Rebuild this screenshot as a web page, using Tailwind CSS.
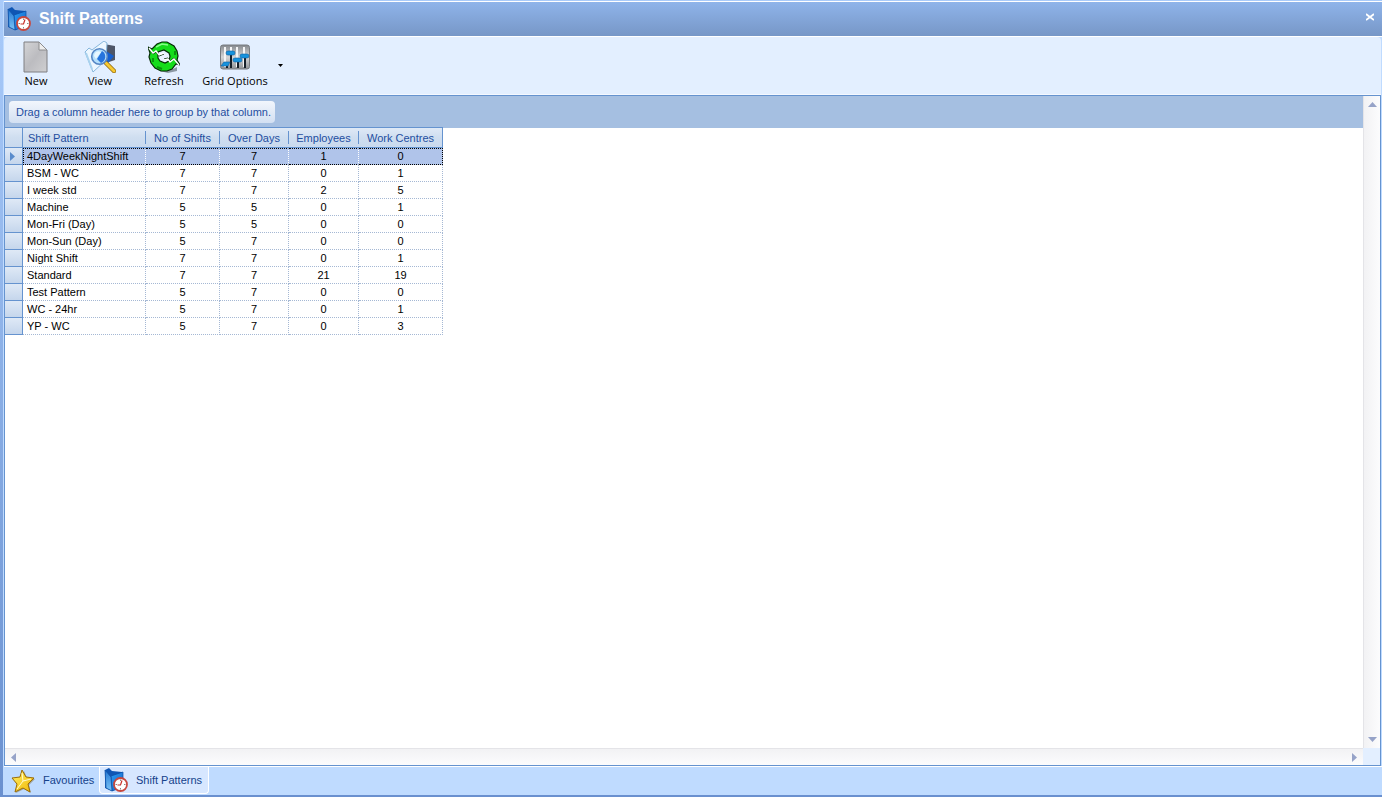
<!DOCTYPE html>
<html lang="en">
  <head>
    <meta charset="UTF-8" />
    <meta name="viewport" content="width=device-width, initial-scale=1.0" />
    <title>Shift Patterns</title>
    <script src="https://cdn.jsdelivr.net/npm/@tailwindcss/browser@4"></script>
  </head>
  <body class="h-screen overflow-hidden flex flex-col pt-px pl-[3px] pb-0.5 bg-linear-to-b from-[#a9cbfa] to-[#6a90cf] font-['Liberation_Sans',sans-serif] text-[11px] text-[#15428b]">
    <svg class="absolute size-0">
      <defs>
        <linearGradient id="folderBack" x1="0" y1="0" x2="1" y2="1">
          <stop offset="0" stop-color="#2c9cf4" />
          <stop offset="1" stop-color="#1262c4" />
        </linearGradient>
        <linearGradient id="folderFront" x1="0" y1="0" x2="0" y2="1">
          <stop offset="0" stop-color="#2478d4" />
          <stop offset="1" stop-color="#7cc4f6" />
        </linearGradient>
        <linearGradient id="paper" x1="0" y1="0" x2="1" y2="1">
          <stop offset="0" stop-color="#d4d4d6" />
          <stop offset="0.5" stop-color="#bcbcc0" />
          <stop offset="1" stop-color="#cfcfd1" />
        </linearGradient>
        <linearGradient id="gold" x1="0" y1="0" x2="1" y2="1">
          <stop offset="0" stop-color="#fff36a" />
          <stop offset="1" stop-color="#f0b400" />
        </linearGradient>
        <linearGradient id="panel" x1="0" y1="0" x2="0" y2="1">
          <stop offset="0" stop-color="#85898e" />
          <stop offset="0.5" stop-color="#d4d6d8" />
          <stop offset="1" stop-color="#8e9296" />
        </linearGradient>
        <symbol id="folderClock" viewBox="0 0 24 24">
          <path d="M1 2 5 0 8 3 18 4V18L8 23 1 20z" fill="#0f56b4" />
          <path d="M7 8 19 4V19L8 23z" fill="url(#folderBack)" stroke="#0d4ca4" stroke-width=".7" />
          <path d="M1 2 7 9 8 23 2 20z" fill="url(#folderFront)" stroke="#1253a8" stroke-width=".8" />
          <circle cx="16.500" cy="16.500" r="6.500" fill="#fff" stroke="#c8483e" stroke-width="1.800" />
          <path d="M16.500 11.500v1.500M16.500 20v1.500M11.500 16.500H13M20 16.500h1.500" stroke="#888" />
          <path d="M18 12.500 16.500 17H13.500" fill="none" stroke="#c8302a" stroke-width="1.200" />
        </symbol>
      </defs>
    </svg>

    <div class="flex-1 min-h-0 flex flex-col pl-px bg-[#bfdbff]">
      <!-- Title bar -->
      <header class="h-9 shrink-0 border-y border-white bg-linear-to-b from-[#8fb4ea] to-[#7797c7] flex items-center pl-[3px] pr-2">
        <svg class="size-6"><use href="#folderClock" /></svg>
        <h1 class="ml-2 text-[16px] leading-5 font-bold text-white">Shift Patterns</h1>
        <button class="ml-auto mb-1 size-2" aria-label="Close">
          <svg class="size-2" viewBox="0 0 8 8" stroke="#fff" stroke-width="1.800"><path d="M0 1 8 7M8 1 0 7" /></svg>
        </button>
      </header>

      <!-- Toolbar -->
      <nav class="h-[58px] shrink-0 mr-px rounded-t-sm bg-[#e3efff] border-b border-b-[#f4f8ff] flex items-start pt-1 text-[11px] leading-4 text-black font-['Open_Sans',sans-serif]">
        <button class="w-16 flex flex-col items-center">
          <svg class="size-8" viewBox="0 0 32 32">
            <path d="M4 1H19L27 9V31H4z" fill="url(#paper)" stroke="#7f7f82" />
            <path d="M19 1V9H27z" fill="#eee" stroke="#8c8c8e" />
          </svg>
          New
        </button>
        <button class="w-16 flex flex-col items-center">
          <svg class="size-8" viewBox="0 0 32 32">
            <path d="M20 3 31 5 31 19 22 22z" fill="#4e5668" />
            <path d="M22 10 30 15 24 22 20 20z" fill="#1560d0" />
            <path d="M1 11 5 7 8 9 20 0 23 2 22 19 9 31z" fill="#edf7ff" stroke="#86b6dc" />
            <path d="M2 12 8 28" stroke="#a9d2ee" stroke-width="2" />
            <path d="m22 22 8 8" stroke="#8d6610" stroke-width="4.500" stroke-linecap="round" />
            <path d="m22 22 8 8" stroke="#f7c931" stroke-width="3" stroke-linecap="round" />
            <circle cx="15.500" cy="15.500" r="7.800" fill="#b4dffc" stroke="#5585c4" stroke-width="1.600" />
            <path d="M18 10c5 3 4 10-1 12l-4-4z" fill="#2674dd" />
            <path d="M10 15c0-4 4-6 7-4l-5 7z" fill="#e8f7ff" />
          </svg>
          View
        </button>
        <button class="w-16 flex flex-col items-center">
          <svg class="size-8" viewBox="0 0 32 32">
            <path d="M12 30 25 28 29 26V30L20 32z" fill="#8b98a4" />
            <path fill-rule="evenodd" d="M0 6 4 8 9 3 14 1H19L26 5 29 10 30 15 29 19 32 24 28 23 24 28 19 30H13L7 27 3 22 1 16 2 12zM10 11 10 17 12 20 17 22 21 20 22 15 21 12 16 9z" fill="#15dc1b" stroke="#052c05" stroke-width="1.200" />
            <path d="M12 13 19 12 21 15 20 18 16 20 12 18z" fill="#eaf3ff" />
            <path d="M5 17 5 21M27 10 27 14M9 26 14 28" fill="none" stroke="#0a930e" stroke-width="2" />
            <path d="M8 6 14 3 20 4" fill="none" stroke="#84ff86" stroke-width="1.500" />
            <path d="M1 8 5 13 8 11 11 15 16 13" fill="none" stroke="#052c05" stroke-width="1" />
            <path d="M1 7 5 12 8 10 11 14 16 12" fill="none" stroke="#fff" stroke-width="1.400" />
            <path d="M16 18 20 17 22 20 26 17 31 23" fill="none" stroke="#052c05" stroke-width="1" />
            <path d="M16 19 20 18 22 21 26 18 31 24" fill="none" stroke="#fff" stroke-width="1.400" />
          </svg>
          Refresh
        </button>
        <button class="w-[78px] flex flex-col items-center">
          <svg class="size-8" viewBox="0 0 32 32">
            <rect x="1.500" y="4" width="29" height="24" rx="2.500" fill="url(#panel)" stroke="#777b80" />
            <path d="M6 6v20M12 6v20M18 6v20M25 6v20" stroke="#f4f5f6" stroke-width="2" />
            <path d="M8 22v5M12 13v14M19 20v7M26 15v12" stroke="#16202a" stroke-width="2" />
            <g fill="#1793dd" stroke="#0a5fa4" stroke-width=".6">
              <path d="M2 25 5 21H11L9 25z" />
              <rect x="7" y="10" width="9" height="4" rx="2" />
              <rect x="14" y="17" width="9" height="4" rx="2" />
              <rect x="21" y="13" width="9" height="4" rx="2" />
            </g>
          </svg>
          Grid Options
        </button>
        <button class="mt-[23px] ml-1" aria-label="More grid options">
          <svg class="w-[5px] h-[3px]" viewBox="0 0 5 3"><path d="M0 0H5L2.500 3z" /></svg>
        </button>
      </nav>

      <!-- Grid -->
      <main class="flex-1 min-h-0 mr-px border border-[#6593cf] bg-white grid grid-cols-[1fr_17px] grid-rows-[1fr_17px]">
        <section class="min-w-0 overflow-hidden">
          <div class="h-8 -mb-px bg-[#a5bfe1] px-1 pt-[5px]">
            <p class="w-fit h-[22px] rounded-sm bg-linear-to-b from-[#f2f6fc] to-[#d3e0f2] pl-[7px] pr-1 leading-[22px] text-[#1f4ea0] whitespace-nowrap">Drag a column header here to group by that column.</p>
          </div>
          <table class="w-[438px] table-fixed border-separate border-spacing-0 leading-4 text-black whitespace-nowrap">
            <colgroup>
              <col class="w-[18px]" />
              <col class="w-[123px]" />
              <col class="w-[74px]" />
              <col class="w-[69px]" />
              <col class="w-[70px]" />
              <col class="w-[84px]" />
            </colgroup>
            <thead class="text-[#1f4ea0]">
              <tr class="h-[21px] *:p-0 *:font-normal *:border-y *:border-[#6593cf] *:bg-linear-to-b *:from-[#dfe9f6] *:via-[#cfdef0] *:to-[#c9d9ee]">
                <td class="border-r"></td>
                <th><div class="h-[13px] leading-[15px] text-left pl-[5px] border-r border-[#6593cf]">Shift Pattern</div></th>
                <th><div class="h-[13px] leading-[15px] border-r border-[#6593cf]">No of Shifts</div></th>
                <th><div class="h-[13px] leading-[15px] border-r border-[#6593cf]">Over Days</div></th>
                <th><div class="h-[13px] leading-[15px] border-r border-[#6593cf]">Employees</div></th>
                <th class="border-r"><div class="h-[13px] leading-[15px]">Work Centres</div></th>
              </tr>
            </thead>
            <tbody id="rows"></tbody>
          </table>
        </section>
        <div class="border-l border-[#e4e4e8] bg-linear-to-r from-[#f2f2f4] to-[#fcfcfd] flex flex-col justify-between items-center py-[6px]">
          <button aria-label="Scroll up"><svg class="w-[9px] h-[5px] block" viewBox="0 0 9 5"><path d="M0 5H9L4.500 0z" fill="#96a3c8" /></svg></button>
          <button aria-label="Scroll down"><svg class="w-[9px] h-[5px] block" viewBox="0 0 9 5"><path d="M0 0H9L4.500 5z" fill="#96a3c8" /></svg></button>
        </div>
        <div class="border-t border-[#e4e4e8] bg-linear-to-b from-[#f2f2f4] to-[#fcfcfd] flex justify-between items-center px-[6px]">
          <button aria-label="Scroll left"><svg class="w-[5px] h-[9px] block" viewBox="0 0 5 9"><path d="M5 0V9L0 4.500z" fill="#96a3c8" /></svg></button>
          <button aria-label="Scroll right"><svg class="w-[5px] h-[9px] block" viewBox="0 0 5 9"><path d="M0 0V9L5 4.500z" fill="#96a3c8" /></svg></button>
        </div>
        <div class="bg-[#e3efff]"></div>
      </main>

      <!-- Window tabs -->
      <footer class="h-[29px] shrink-0 border-t border-white flex items-start">
        <button class="h-[27px] w-[95px] pl-[7px] flex items-center gap-2">
          <svg class="size-6 shrink-0" viewBox="0 0 24 24">
            <path d="M13 2 16 9 24 10 18 16 20 24 13 20 5 24 7 16 2 10 10 9z" fill="#7d6a35" opacity=".5" />
            <path d="M11 1 15 8 23 9 17 15 19 23 12 19 4 23 6 15 1 9 9 8z" fill="url(#gold)" stroke="#9a6c08" />
            <path d="M11 4 12 12 20 10M12 12 6 20" fill="none" stroke="#fffbd0" />
          </svg>
          Favourites
        </button>
        <button class="h-[27px] w-[110px] pl-1 flex items-center gap-2 bg-[#d7e7ff] border border-t-0 border-white rounded-b-sm whitespace-nowrap">
          <svg class="size-6 shrink-0"><use href="#folderClock" /></svg>
          Shift Patterns
        </button>
      </footer>
    </div>

    <script>
      const patterns = [
        ["4DayWeekNightShift", 7, 7, 1, 0],
        ["BSM - WC", 7, 7, 0, 1],
        ["I week std", 7, 7, 2, 5],
        ["Machine", 5, 5, 0, 1],
        ["Mon-Fri (Day)", 5, 5, 0, 0],
        ["Mon-Sun (Day)", 5, 7, 0, 0],
        ["Night Shift", 7, 7, 0, 1],
        ["Standard", 7, 7, 21, 19],
        ["Test Pattern", 5, 7, 0, 0],
        ["WC - 24hr", 5, 7, 0, 1],
        ["YP - WC", 5, 7, 0, 3],
      ];

      const arrow =
        '<svg class="w-[5px] h-[9px] block ml-[5px]" viewBox="0 0 5 9"><path d="M0 0V9L5 4.500z" fill="#5a8ccc" /></svg>';

      document.getElementById("rows").innerHTML = patterns
        .map(([name, ...counts], i) => {
          const selected = i === 0;
          // the focused row has a black dotted frame that leaves out the row selector
          const cell = selected
            ? "p-0 bg-[#b0c4ea] border-y border-r border-dotted border-y-black border-r-white last:border-r-black"
            : "p-0 border-r border-b border-dotted border-[#a5b8d4]";
          const line = selected ? "leading-[15px]" : "leading-4";
          const first = selected ? "border-l border-l-black pl-[3px]" : "pl-1";
          return `<tr class="h-[17px] ${line}">
            <td class="p-0 border-r border-b border-[#6593cf] bg-linear-to-b from-[#dfe9f6] to-[#c5d6ec]">${selected ? arrow : ""}</td>
            <td class="${cell} ${first}">${name}</td>
            ${counts.map((n) => `<td class="${cell} text-center">${n}</td>`).join("")}
          </tr>`;
        })
        .join("");
    </script>
  </body>
</html>
